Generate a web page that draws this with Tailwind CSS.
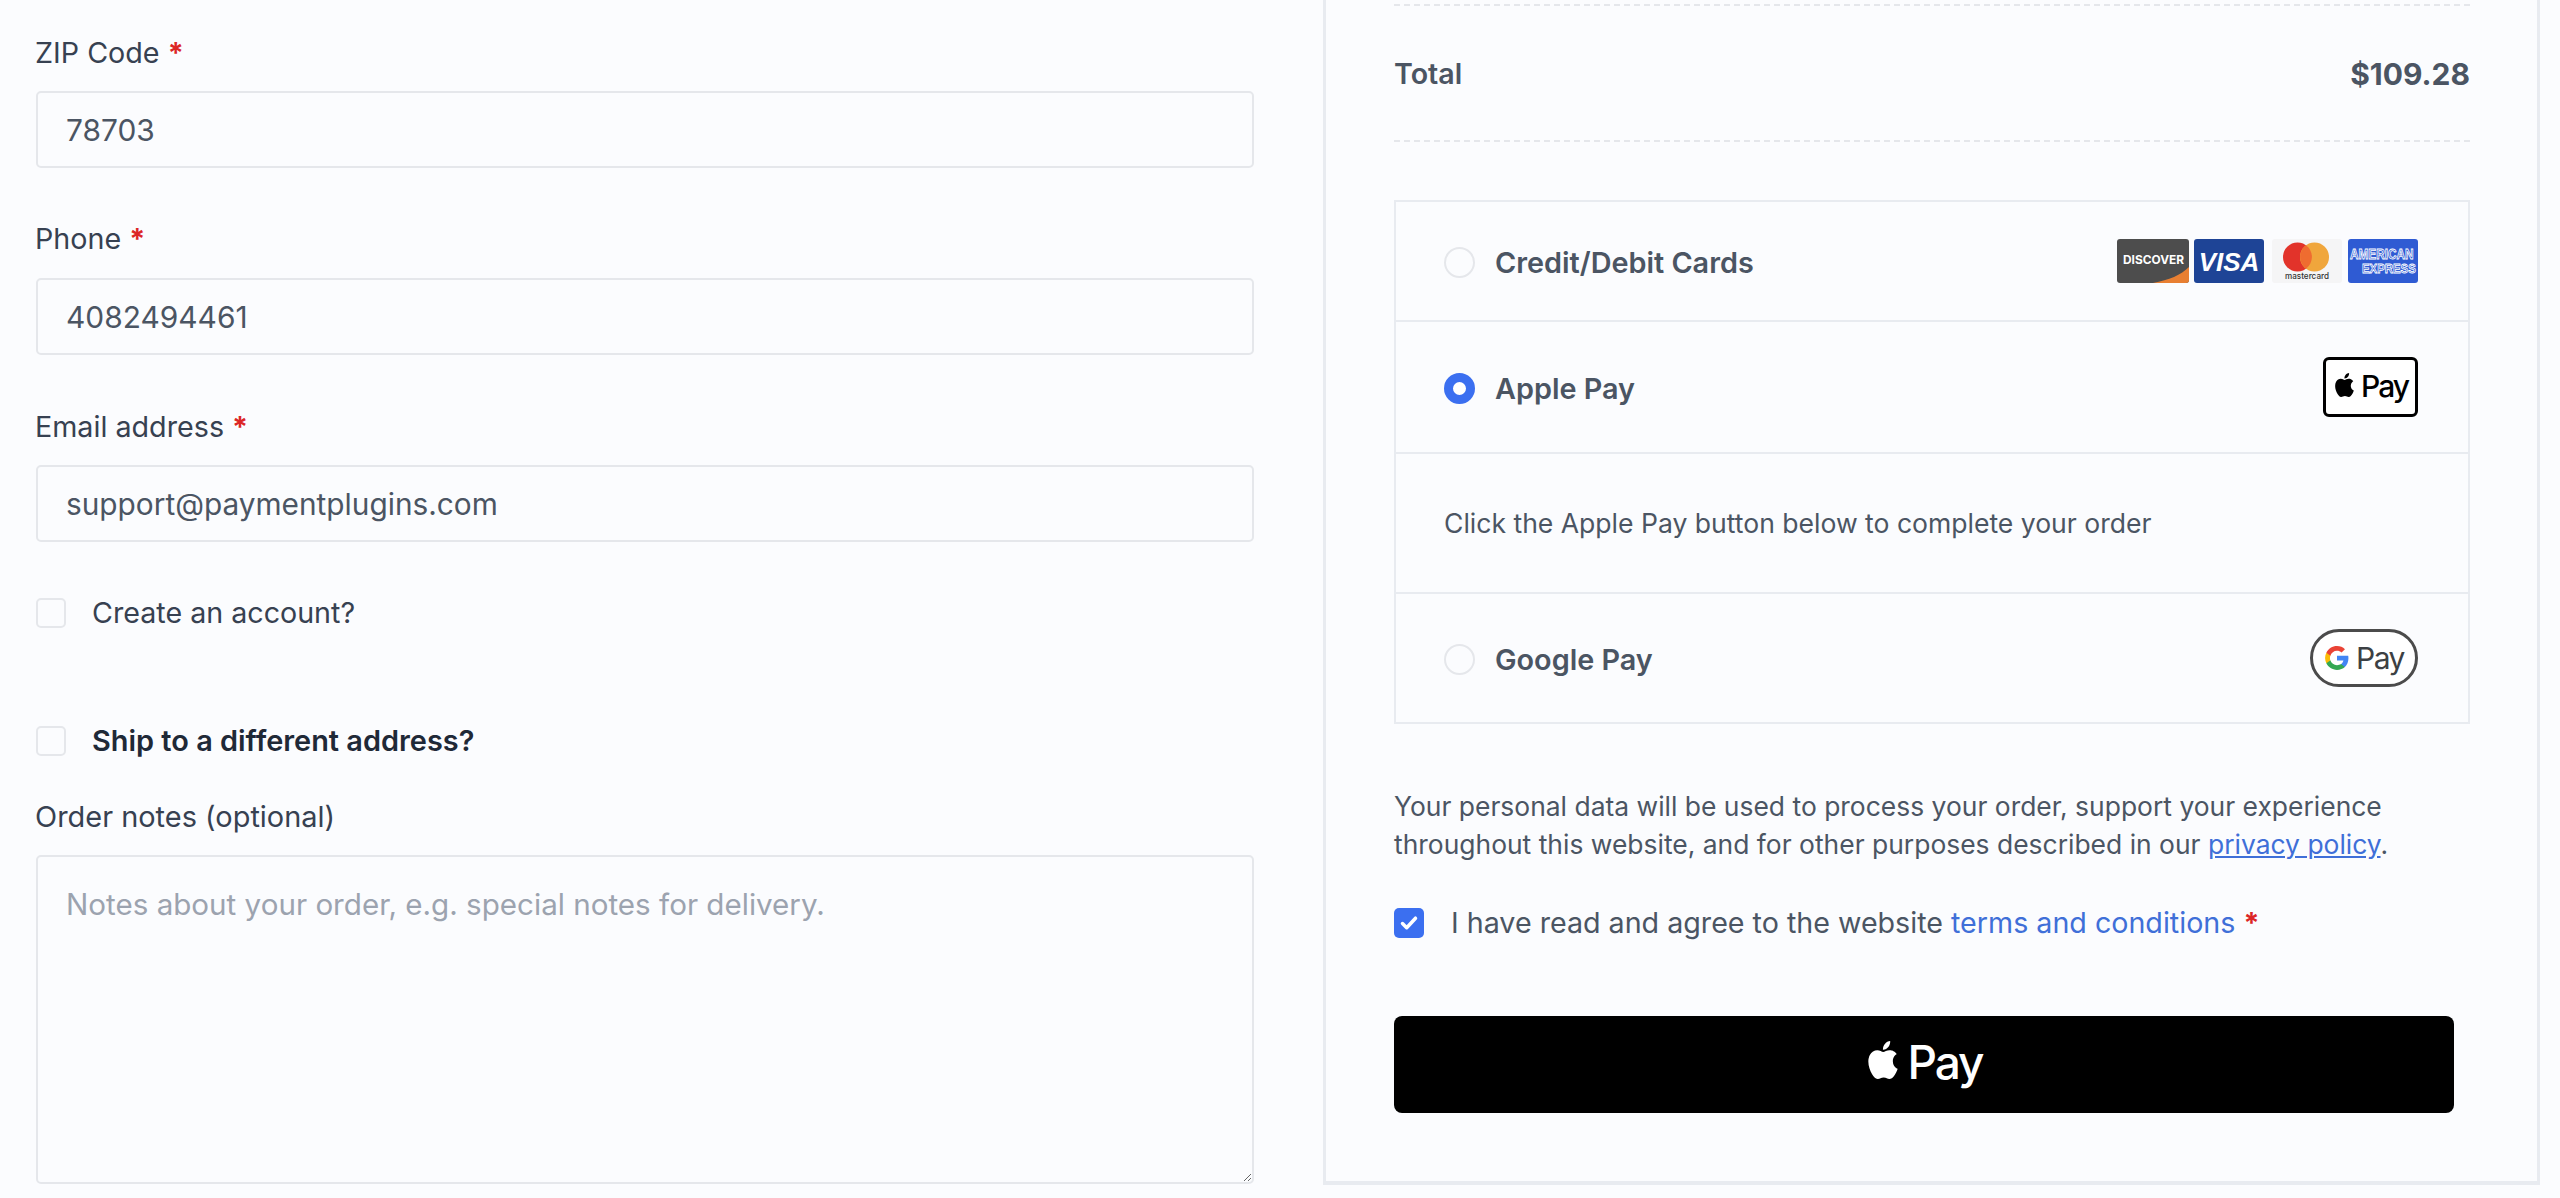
<!DOCTYPE html>
<html lang="en">
<head>
  <meta charset="UTF-8">
  <title>Checkout</title>
  <script src="https://cdn.jsdelivr.net/npm/@tailwindcss/browser@4"></script>
</head>
<body class="bg-[#fbfcfe] text-[#374151] [font-family:Inter,sans-serif]">
  <div class="flex h-[1198px] w-[2560px] overflow-hidden">

    <!-- billing form -->
    <form class="ml-[36px] w-[1218px] shrink-0 pt-[34px]">
      <label class="-ml-[1px] mb-[19px] block text-[28.7px] leading-[38px]">ZIP Code <span class="font-bold text-[#dc2626]">*</span></label>
      <input type="text" value="78703" class="h-[77px] w-full rounded-[5px] border-2 border-[#e5e7eb] px-[28px] text-[29.9px] text-[#4b5563]">

      <label class="-ml-[1px] mt-[52px] mb-[20px] block text-[28.7px] leading-[38px]">Phone <span class="font-bold text-[#dc2626]">*</span></label>
      <input type="text" value="4082494461" class="h-[77px] w-full rounded-[5px] border-2 border-[#e5e7eb] px-[28px] text-[29.9px] text-[#4b5563]">

      <label class="-ml-[1px] mt-[53px] mb-[19px] block text-[28.7px] leading-[38px]">Email address <span class="font-bold text-[#dc2626]">*</span></label>
      <input type="text" value="support@paymentplugins.com" class="h-[77px] w-full rounded-[5px] border-2 border-[#e5e7eb] px-[28px] text-[29.8px] text-[#4b5563]">

      <label class="mt-[56px] flex h-[30px] items-center gap-[26px] text-[28.65px]">
        <input type="checkbox" class="h-[30px] w-[30px] appearance-none rounded-[5px] border-2 border-[#e5e7eb]">
        Create an account?
      </label>

      <label class="mt-[98px] flex h-[30px] items-center gap-[26px] text-[28.9px] font-semibold text-[#1f2937]">
        <input type="checkbox" class="h-[30px] w-[30px] appearance-none rounded-[5px] border-2 border-[#e5e7eb]">
        Ship to a different address?
      </label>

      <label class="-ml-[1px] mt-[42px] mb-[19px] block text-[28.95px] leading-[38px]">Order notes (optional)</label>
      <textarea placeholder="Notes about your order, e.g. special notes for delivery." class="block h-[329px] w-full rounded-[5px] border-2 border-[#e5e7eb] px-[28px] pt-[28px] text-[29.6px] leading-[38px] text-[#4b5563] placeholder:text-[#9ca3af]"></textarea>
    </form>

    <!-- order review -->
    <div class="ml-[69px] h-[1185px] w-[1217px] shrink-0 border-x-[3px] border-b-[4px] border-[#e8ebf0] pl-[68px] pr-[67px] pt-[4px]">
      <div class="flex h-[138px] items-center justify-between border-y-2 border-dashed border-[#e5e7eb] text-[#4b5563]">
        <span class="mt-[2px] text-[28.6px] font-semibold">Total</span>
        <span class="mt-[2px] text-[30px] font-bold">$109.28</span>
      </div>

      <div class="mt-[58px] border-2 border-[#e8ebf0] text-[28.8px] font-semibold text-[#4b5563]">
        <div class="flex h-[118px] items-center pl-[48px] pr-[50px]">
          <input type="radio" name="pay" class="mt-[3px] h-[31px] w-[31px] appearance-none rounded-full border-2 border-[#e5e7eb]">
          <span class="mt-[3px] ml-[20px]">Credit/Debit Cards</span>
          <div class="ml-auto flex items-center gap-[6px]">
            <svg width="72" height="44" viewBox="0 0 72 44" class="-mr-[1px]">
              <rect width="72" height="44" rx="3" fill="#4d4d4d"/>
              <path d="M72 28V41a3 3 0 0 1-3 3H36C52 41 64 36 72 28z" fill="#e87f32"/>
              <text x="6" y="25" textLength="61" lengthAdjust="spacingAndGlyphs" font-family="Inter" font-size="12" font-weight="700" fill="#fff">DISCOVER</text>
            </svg>
            <svg width="70" height="44" viewBox="0 0 70 44">
              <rect width="70" height="44" rx="3" fill="#1e4496"/>
              <text x="35" y="32" text-anchor="middle" font-family="Liberation Sans" font-size="26" font-style="italic" font-weight="700" fill="#fff">VISA</text>
            </svg>
            <svg width="70" height="44" viewBox="0 0 70 44" class="ml-[2px]">
              <rect width="70" height="44" rx="3" fill="#f5f5f6"/>
              <circle cx="25.5" cy="18" r="14.5" fill="#e2332a"/>
              <circle cx="42.5" cy="18" r="14.5" fill="#f0a63c"/>
              <path d="M34 6.3a14.5 14.5 0 0 1 0 23.4a14.5 14.5 0 0 1 0-23.4z" fill="#ef6c30"/>
              <text x="13" y="40" textLength="44" lengthAdjust="spacingAndGlyphs" font-family="Inter" font-size="9" font-weight="500" fill="#333">mastercard</text>
            </svg>
            <svg width="70" height="44" viewBox="0 0 70 44">
              <rect width="70" height="44" rx="3" fill="#2f5bd3"/>
              <text x="2" y="16.7" transform="scale(1 1.2)" font-family="Liberation Sans" font-size="11.8" font-weight="700" fill="#2f5bd3" stroke="#fff" stroke-width=".7">AMERICAN</text>
              <text x="14" y="28.3" transform="scale(1 1.2)" font-family="Liberation Sans" font-size="11.4" font-weight="700" fill="#2f5bd3" stroke="#fff" stroke-width=".7">EXPRESS</text>
            </svg>
          </div>
        </div>

        <div class="flex h-[132px] items-center border-t-2 border-[#e8ebf0] pl-[48px] pr-[50px]">
          <input type="radio" name="pay" checked class="mt-[3px] h-[31px] w-[31px] appearance-none rounded-full border-[9.5px] border-[#3b6ff0] bg-white">
          <span class="mt-[3px] ml-[20px]">Apple Pay</span>
          <div class="ml-auto flex h-[60px] w-[95px] items-center justify-center gap-[5px] rounded-[6px] border-[3px] border-black bg-white text-[30px] leading-none font-medium tracking-[-2px] text-black">
            <svg width="23" height="24" viewBox="0 0 24 24" fill="#000" preserveAspectRatio="none" class="mb-[4px]"><path d="M12.152 6.896c-.948 0-2.415-1.078-3.96-1.04-2.04.027-3.91 1.183-4.961 3.014-2.117 3.675-.546 9.103 1.519 12.09 1.013 1.454 2.208 3.09 3.792 3.039 1.52-.065 2.09-.987 3.935-.987 1.831 0 2.35.987 3.96.948 1.637-.026 2.676-1.48 3.676-2.948 1.156-1.688 1.636-3.325 1.662-3.415-.039-.013-3.182-1.221-3.22-4.857-.026-3.04 2.48-4.494 2.597-4.559-1.429-2.09-3.623-2.324-4.39-2.376-2-.156-3.675 1.09-4.61 1.09zM15.53 3.83c.843-1.012 1.4-2.427 1.245-3.83-1.207.052-2.662.805-3.532 1.818-.78.896-1.454 2.338-1.273 3.714 1.338.104 2.715-.688 3.559-1.701"/></svg>
            <span class="mb-[2px]">Pay</span>
          </div>
        </div>

        <div class="flex h-[140px] items-center border-t-2 border-[#e8ebf0] pl-[48px] pt-[2px] text-[26.55px] font-normal">
          Click the Apple Pay button below to complete your order
        </div>

        <div class="flex h-[130px] items-center border-t-2 border-[#e8ebf0] pl-[48px] pr-[50px]">
          <input type="radio" name="pay" class="mt-[3px] h-[31px] w-[31px] appearance-none rounded-full border-2 border-[#e5e7eb]">
          <span class="mt-[3px] ml-[20px]">Google Pay</span>
          <div class="ml-auto flex h-[58px] w-[108px] items-center justify-center gap-[6px] rounded-full border-[3px] border-[#4b4b4b] bg-white text-[30px] leading-none font-normal tracking-[-1.5px] text-[#3c4043]">
            <svg width="26" height="26" viewBox="0 0 24 24">
              <path fill="#4285F4" d="M22.56 12.25c0-.78-.07-1.53-.2-2.25H12v4.26h5.92c-.26 1.37-1.04 2.53-2.21 3.31v2.77h3.57c2.08-1.92 3.28-4.74 3.28-8.09z"/>
              <path fill="#34A853" d="M12 23c2.97 0 5.46-.98 7.28-2.66l-3.57-2.77c-.98.66-2.23 1.06-3.71 1.06-2.86 0-5.29-1.93-6.16-4.53H2.18v2.84C3.99 20.53 7.7 23 12 23z"/>
              <path fill="#FBBC05" d="M5.84 14.09c-.22-.66-.35-1.36-.35-2.09s.13-1.43.35-2.09V7.07H2.18C1.43 8.55 1 10.22 1 12s.43 3.45 1.18 4.93l2.85-2.22.81-.62z"/>
              <path fill="#EA4335" d="M12 5.38c1.62 0 3.06.56 4.21 1.64l3.15-3.15C17.45 2.09 14.97 1 12 1 7.7 1 3.99 3.47 2.18 7.07l3.66 2.84c.87-2.6 3.3-4.53 6.16-4.53z"/>
            </svg>
            <span>Pay</span>
          </div>
        </div>
      </div>

      <p class="mt-[63px] text-[26.45px] leading-[38px] text-[#4b5563]">
        Your personal data will be used to process your order, support your experience<br>
        throughout this website, and for other purposes described in our <a href="#" class="text-[#3f6fd8] underline">privacy policy</a>.
      </p>

      <label class="mt-[45px] flex h-[30px] items-center text-[28.65px] text-[#4b5563]">
        <span class="flex h-[30px] w-[30px] items-center justify-center rounded-[5px] bg-[#3b6ff0]">
          <svg width="18" height="18" viewBox="0 0 18 18" fill="none" stroke="#fff" stroke-width="3.5" stroke-linecap="round" stroke-linejoin="round"><path d="M2.5 9.5l4.2 4.2 8.8-9.5"/></svg>
        </span>
        <span class="ml-[27px]">I have read and agree to the website <a href="#" class="text-[#3f6fd8]">terms and conditions</a> <span class="font-bold text-[#dc2626]">*</span></span>
      </label>

      <button type="button" class="mt-[78px] flex h-[97px] w-[1060px] items-center justify-center gap-[6px] rounded-[8px] bg-black text-[46px] leading-none font-medium tracking-[-2px] text-white">
        <svg width="36" height="38" viewBox="0 0 24 24" fill="#fff" preserveAspectRatio="none" class="mb-[9px]"><path d="M12.152 6.896c-.948 0-2.415-1.078-3.96-1.04-2.04.027-3.91 1.183-4.961 3.014-2.117 3.675-.546 9.103 1.519 12.09 1.013 1.454 2.208 3.09 3.792 3.039 1.52-.065 2.09-.987 3.935-.987 1.831 0 2.35.987 3.96.948 1.637-.026 2.676-1.48 3.676-2.948 1.156-1.688 1.636-3.325 1.662-3.415-.039-.013-3.182-1.221-3.22-4.857-.026-3.04 2.48-4.494 2.597-4.559-1.429-2.09-3.623-2.324-4.39-2.376-2-.156-3.675 1.09-4.61 1.09zM15.53 3.83c.843-1.012 1.4-2.427 1.245-3.83-1.207.052-2.662.805-3.532 1.818-.78.896-1.454 2.338-1.273 3.714 1.338.104 2.715-.688 3.559-1.701"/></svg>
        <span class="mb-[5px]">Pay</span>
      </button>
    </div>
  </div>
</body>
</html>
